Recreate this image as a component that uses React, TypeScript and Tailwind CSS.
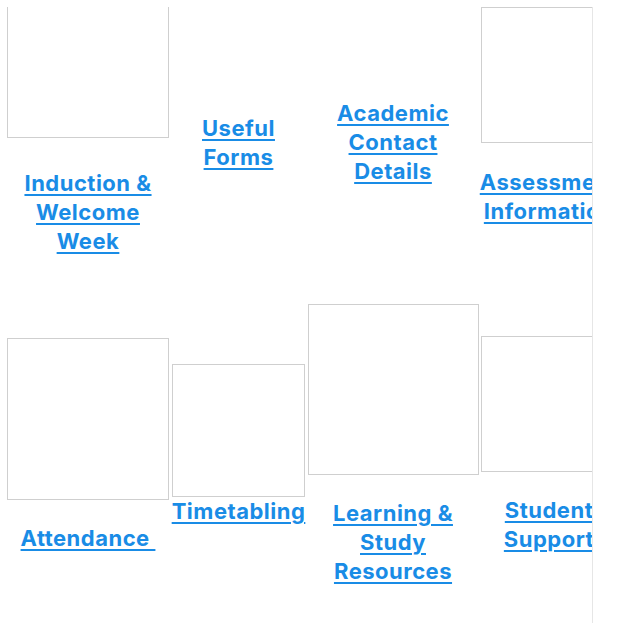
const linkCls =
  "font-bold text-[22px] leading-[29px] tracking-[0.5px] text-[#198ce6] underline decoration-[1.5px] underline-offset-[3px] text-center";

function Box({ size, className = "" }: { size: number; className?: string }) {
  return (
    <div
      className={`border border-[#cfcfcf] bg-white ${className}`}
      style={{ width: size, height: size }}
    />
  );
}

export default function App() {
  return (
    <div className="min-h-[628px] bg-white" style={{ fontFamily: "Inter, 'Noto Sans', sans-serif" }}>
      <div className="ml-[7px] mt-[7px] h-[616px] w-[586px] overflow-hidden border-r border-[#e6e6e6]">
        <div className="grid w-[620px] grid-cols-[162px_133px_170px_136px] grid-rows-[283px_310px] gap-x-[3px]">
          {/* row 1 */}
          <div className="flex flex-col items-center self-start -mt-[31px]">
            <Box size={162} />
            <a className={`${linkCls} mt-[31px] px-3`}>Induction &amp; Welcome Week</a>
          </div>
          <div className="flex flex-col items-center self-start mt-[107px]">
            <a className={linkCls}>Useful Forms</a>
          </div>
          <div className="flex flex-col items-center self-start mt-[92px]">
            <a className={`${linkCls} px-4`}>Academic Contact Details</a>
          </div>
          <div className="flex flex-col items-center self-start">
            <Box size={136} />
            <a className={`${linkCls} mt-[25px]`}>Assessment Information</a>
          </div>

          {/* row 2 */}
          <div className="flex flex-col items-center self-center">
            <Box size={162} />
            <a className={`${linkCls} mt-[24px]`}>Attendance&nbsp;</a>
          </div>
          <div className="flex flex-col items-center self-center">
            <Box size={133} />
            <a className={linkCls}>Timetabling</a>
          </div>
          <div className="flex flex-col items-center self-center">
            <Box size={171} />
            <a className={`${linkCls} mt-[24px]`}>Learning &amp; Study Resources</a>
          </div>
          <div className="flex flex-col items-center self-center">
            <Box size={136} />
            <a className={`${linkCls} mt-[24px]`}>Student Support</a>
          </div>
        </div>
      </div>
    </div>
  );
}
